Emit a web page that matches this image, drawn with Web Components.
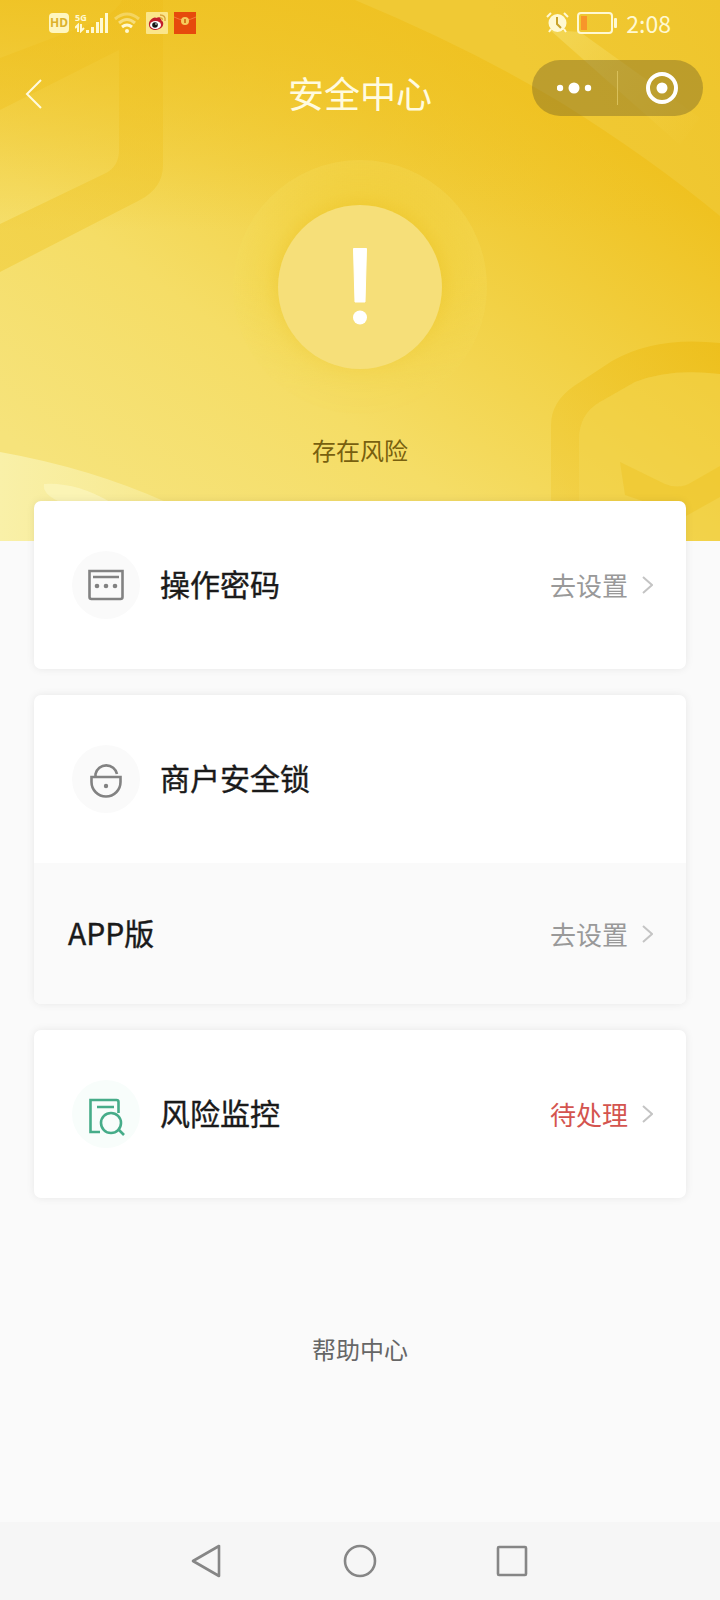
<!DOCTYPE html>
<html lang="zh-CN">
<head>
<meta charset="utf-8">
<meta name="viewport" content="width=device-width, initial-scale=1">
<title>安全中心</title>
<style>
  html, body { margin: 0; }
  body {
    background: #fafafa;
    color: #1a1a1a;
    font-family: "Noto Sans CJK SC", "Noto Sans", sans-serif;
    font-size: 24px;
  }
</style>
</head>
<body>
<security-page>
  <security-hero slot="hero" status="存在风险">
    <status-bar slot="top" time="2:08"></status-bar>
    <title-bar slot="top" heading="安全中心"></title-bar>
  </security-hero>

  <setting-card>
    <setting-row label="操作密码" action="去设置"><line-icon slot="icon" name="password"></line-icon></setting-row>
  </setting-card>
  <setting-card>
    <setting-row label="商户安全锁"><line-icon slot="icon" name="lock"></line-icon></setting-row>
    <setting-row sub label="APP版" action="去设置"></setting-row>
  </setting-card>
  <setting-card>
    <setting-row label="风险监控" action="待处理" urgent><line-icon slot="icon" name="monitor"></line-icon></setting-row>
  </setting-card>

  <a slot="help" href="#help">帮助中心</a>
  <system-nav slot="nav"></system-nav>
</security-page>

<script>
const define = (name, render) => customElements.define(name, class extends HTMLElement {
  constructor() {
    super();
    this.attachShadow({ mode: 'open' });
  }
  connectedCallback() {
    this.shadowRoot.innerHTML = render(this);
  }
});

define('security-page', () => `
  <style>
    :host { display: flex; flex-direction: column; min-height: 100vh; }
    main { display: flex; flex-direction: column; gap: 26px; margin: -40px 34px 0; position: relative; }
    footer { text-align: center; margin: 133px 0 100px; line-height: 36px; }
    ::slotted(a) { color: #666; text-decoration: none; }
    ::slotted(system-nav) { margin-top: auto; }
  </style>
  <slot name="hero"></slot>
  <main><slot></slot></main>
  <footer><slot name="help"></slot></footer>
  <slot name="nav"></slot>`);

define('security-hero', el => `
  <style>
    :host { display: block; position: relative; padding-bottom: 73px; overflow: hidden; }
    .scene { position: absolute; inset: 0; width: 100%; height: 100%; }
    header, section { position: relative; }
    section { display: flex; flex-direction: column; align-items: center; gap: 15px; margin-top: 41px; }
    p { margin: 0; line-height: 36px; color: #78600f; }
    .emblem { display: block; }
  </style>
  <svg class="scene" viewBox="0 0 720 541" preserveAspectRatio="none" aria-hidden="true">
    <defs>
      <linearGradient id="base" gradientUnits="userSpaceOnUse" x1="120" y1="520" x2="480" y2="30">
        <stop offset="0" stop-color="#f6e37b"/><stop offset=".35" stop-color="#f5dd66"/>
        <stop offset=".65" stop-color="#f2d145"/><stop offset="1" stop-color="#efc11f"/>
      </linearGradient>
      <linearGradient id="topFade" x1="0" y1="0" x2="0" y2="1">
        <stop offset="0" stop-color="#efc223" stop-opacity=".9"/><stop offset="1" stop-color="#efc223" stop-opacity="0"/>
      </linearGradient>
      <linearGradient id="corner" gradientUnits="userSpaceOnUse" x1="540" y1="100" x2="720" y2="0">
        <stop offset="0" stop-color="#f0c934"/><stop offset="1" stop-color="#efc52c"/>
      </linearGradient>
      <linearGradient id="beam" gradientUnits="userSpaceOnUse" x1="550" y1="30" x2="690" y2="150">
        <stop offset="0" stop-color="#f5dc62" stop-opacity=".7"/><stop offset="1" stop-color="#f3d34d" stop-opacity="0"/>
      </linearGradient>
      <linearGradient id="hex" x1="0" y1="0" x2="0" y2="1">
        <stop offset="0" stop-color="#eebd1b" stop-opacity=".4"/><stop offset="1" stop-color="#f0c92f" stop-opacity=".5"/>
      </linearGradient>
      <linearGradient id="hexR" x1="1" y1="0" x2="0" y2="1">
        <stop offset="0" stop-color="#edbd18" stop-opacity=".8"/><stop offset="1" stop-color="#efc62c" stop-opacity=".3"/>
      </linearGradient>
      <linearGradient id="pale" x1="0" y1="0" x2="1" y2="0">
        <stop offset="0" stop-color="#f9f0a8"/><stop offset="1" stop-color="#f8eb96" stop-opacity=".5"/>
      </linearGradient>
    </defs>
    <rect width="720" height="541" fill="url(#base)"/>
    <rect width="720" height="230" fill="url(#topFade)"/>
    <path d="M355 0H720V216Q650 158 560 102Q470 48 355 0Z" fill="url(#corner)"/>
    <path d="M550 30L580 32L700 118L680 145Z" fill="url(#beam)"/>
    <path d="M0 58L100 20Q118 10 122 0H163V165Q163 188 140 200L0 272V224L106 173Q119 166 119 150V50L0 110Z" fill="url(#hex)"/>
    <path d="M551 541V425Q551 402 574 386L612 361Q655 336 720 343V374Q670 368 635 382L600 402Q579 414 579 440V541Z" fill="url(#hexR)"/>
    <path d="M579 541V440Q579 414 600 402L635 382Q670 368 720 374V541Z" fill="#f1cf42" fill-opacity=".5"/>
    <path d="M620 462L665 484Q680 490 692 482L720 466V497L686 516L625 495Z" fill="#eec01f" fill-opacity=".4"/>
    <path d="M0 452Q90 468 166 502L260 541H0Z" fill="url(#pale)"/>
    <path d="M44 484Q76 482 110 502H60Q42 494 44 484Z" fill="#fbf5ba" fill-opacity=".8"/>
  </svg>
  <header><slot name="top"></slot></header>
  <section>
    <svg class="emblem" width="260" height="260" viewBox="0 0 260 260" role="img" aria-label="警告">
      <defs>
        <radialGradient id="halo">
          <stop offset=".62" stop-color="#edc524" stop-opacity=".45"/>
          <stop offset=".76" stop-color="#f3d544" stop-opacity=".35"/>
          <stop offset="1" stop-color="#f5de5e" stop-opacity=".3"/>
        </radialGradient>
        <linearGradient id="fade" x1="0" y1="0" x2="0" y2="1">
          <stop offset=".45" stop-color="#fff"/><stop offset=".9" stop-color="#555"/>
        </linearGradient>
        <mask id="soft"><rect width="260" height="260" fill="url(#fade)"/></mask>
      </defs>
      <circle cx="130" cy="130" r="127" fill="url(#halo)" mask="url(#soft)"/>
      <circle cx="130" cy="130" r="82" fill="#f6df79"/>
      <path d="M123.500 91.500H136.500L135 145H125Z" fill="#fff" stroke="#fff" stroke-linejoin="round"/>
      <circle cx="130" cy="160.500" r="7" fill="#fff"/>
    </svg>
    <p>${el.getAttribute('status')}</p>
  </section>`);

define('status-bar', el => `
  <style>
    :host { display: flex; align-items: center; justify-content: space-between; height: 46px; padding: 0 49px; color: #fff9d2; box-sizing: border-box; }
    div { display: flex; align-items: center; }
    svg { display: block; }
    .left { gap: 6px; }
    .right { gap: 8px; }
    .hd { width: 20px; height: 20px; border-radius: 4px; background: #fff6c0; color: #dcb22c; font: 700 12px/20px "Noto Sans", sans-serif; text-align: center; }
    .net { align-items: flex-end; }
    .gen { flex-direction: column; align-items: flex-start; width: 11px; font: 700 9px/10px "Open Sans", sans-serif; }
    time { font-size: 23px; line-height: 36px; }
  </style>
  <div class="left">
    <span class="hd">HD</span>
    <div class="net">
      <div class="gen"><span>5G</span>
        <svg width="10" height="10" viewBox="0 0 10 10" fill="none" stroke="currentColor" stroke-width="2"><path d="M3 9V2L0 5M6 1V8L9 5"/></svg>
      </div>
      <svg width="22" height="20" viewBox="0 0 22 20" fill="currentColor"><path d="M0 17h3v3H0zM5 14h3v6H5zM10 9h3v11h-3zM14 5h3v15h-3zM19 0h3v20h-3z"/></svg>
    </div>
    <svg width="26" height="22" viewBox="0 0 26 22" fill="none" stroke="currentColor" stroke-width="3">
      <path d="M1 7Q13 -3 25 7" opacity=".35"/><path d="M5 11Q13 4 21 11" opacity=".5"/><path d="M8 15Q13 11 18 15"/><circle cx="13" cy="19" r="2" fill="currentColor" stroke="none"/>
    </svg>
    <svg width="22" height="22" viewBox="0 0 22 22">
      <rect width="22" height="22" rx="1" fill="#fbe68a"/>
      <path d="M3 13C2 9 8 4 10 6C14 4 16 6 15 8C19 10 18 17 10 18C6 18 3 16 3 13Z" fill="#c2202c"/>
      <ellipse cx="9.500" cy="13" rx="5.500" ry="4" fill="#fff"/><circle cx="9" cy="13" r="2.800" fill="#151515"/><circle cx="10" cy="12" r=".8" fill="#fff"/>
      <path d="M14 3Q20 3 19 9M14 6Q17 6 16 8" fill="none" stroke="#dca43a" stroke-width="1.400"/>
    </svg>
    <svg width="22" height="22" viewBox="0 0 22 22">
      <rect width="22" height="22" fill="#e64a0c"/><path d="M0 5Q11 11 22 5" fill="none" stroke="#f27d3a"/><circle cx="11" cy="9" r="4" fill="#f6cb5c"/><path d="M11 7v4" stroke="#d97a1c" stroke-width="2"/>
    </svg>
  </div>
  <div class="right">
    <svg width="23" height="22" viewBox="0 0 23 22">
      <path d="M1 5L5 1M22 5L18 1M5 17L3 20M18 17L20 20" stroke="currentColor" stroke-width="2" fill="none"/>
      <circle cx="11.500" cy="11" r="9" fill="currentColor"/><path d="M11 5v7l4 4" fill="none" stroke="#c9a32c" stroke-width="2"/>
    </svg>
    <svg width="41" height="22" viewBox="0 0 41 22">
      <rect x="1" y="1" width="34" height="20" rx="3" fill="none" stroke="currentColor" stroke-width="2"/>
      <rect x="4" y="4" width="6" height="14" fill="#f8962a"/><rect x="37" y="6" width="3" height="10" rx="1" fill="currentColor"/>
    </svg>
    <time>${el.getAttribute('time')}</time>
  </div>`);

define('title-bar', el => `
  <style>
    :host { display: grid; grid-template-columns: 1fr auto 1fr; align-items: end; padding: 14px 17px 0; color: #fffbe0; }
    h1 { margin: 0; font-size: 36px; font-weight: 400; line-height: 48px; }
    button { border: 0; padding: 0; background: none; color: inherit; display: grid; place-items: center; cursor: pointer; }
    .back { width: 34px; height: 44px; }
    .capsule { justify-self: end; display: flex; align-items: center; width: 171px; height: 56px; border-radius: 28px; background: rgba(112, 96, 38, .4); }
    .capsule button { flex: 1; height: 56px; }
    .capsule i { width: 1px; height: 34px; background: #d9c05a; }
  </style>
  <button class="back" aria-label="返回"><svg width="18" height="30" viewBox="0 0 18 30" fill="none" stroke="currentColor" stroke-width="2"><path d="M16 1L2 15L16 29"/></svg></button>
  <h1>${el.getAttribute('heading')}</h1>
  <div class="capsule">
    <button aria-label="更多"><svg width="36" height="12" viewBox="0 0 36 12" fill="#fff"><circle cx="3" cy="6" r="3.200"/><circle cx="17" cy="6" r="5.500"/><circle cx="31" cy="6" r="3.200"/></svg></button>
    <i></i>
    <button aria-label="关闭"><svg width="34" height="34" viewBox="0 0 34 34"><circle cx="18" cy="17" r="14" fill="none" stroke="#fff" stroke-width="4"/><circle cx="18" cy="17" r="5.500" fill="#fff"/></svg></button>
  </div>`);

define('setting-card', () => `
  <style>
    :host { display: block; border-radius: 7px; background: #fff; box-shadow: 0 0 8px rgba(0, 0, 0, .08); overflow: hidden; }
  </style>
  <slot></slot>`);

define('setting-row', el => {
  const action = el.getAttribute('action');
  return `
  <style>
    :host { display: flex; align-items: center; height: 168px; padding: 0 33px 0 38px; color: #1a1a1a; }
    :host([sub]) { height: 141px; padding-left: 34px; background: #fafafa; }
    ::slotted(line-icon) { margin-right: 20px; }
    h2 { margin: 0; padding-bottom: 4px; flex: 1; font-size: 30px; font-weight: 400; line-height: 44px; -webkit-text-stroke: .4px; }
    a { display: flex; align-items: center; gap: 14px; font-size: 26px; line-height: 38px; color: #999; text-decoration: none; }
    :host([urgent]) a { color: #d4544f; }
    svg { display: block; }
  </style>
  <slot name="icon"></slot>
  <h2>${el.getAttribute('label')}</h2>
  ${action ? `<a href="#detail">${action}<svg width="11" height="18" viewBox="0 0 11 18" fill="none" stroke="#c4c4c4" stroke-width="2"><path d="M1 1L10 9L1 17"/></svg></a>` : ''}`;
});

const drawings = {
  password: '<path d="M17.500 20H50.500V46Q50.500 48 48.500 48H19.500Q17.500 48 17.500 46Z"/><path d="M21 26H47"/><g fill="currentColor" stroke="none"><circle cx="25" cy="35" r="2.300"/><circle cx="34" cy="35" r="2.300"/><circle cx="43" cy="35" r="2.300"/></g>',
  lock: '<path d="M19.500 32H48.500V37A14.500 14.500 0 0 1 19.500 37ZM23.500 32V29A11 11 0 0 1 45 29"/><circle cx="34" cy="41" r="2.200" fill="currentColor" stroke="none"/>',
  monitor: '<path d="M28 52H18.500V20H44.500Q46.500 20 46.500 22V33M25 27H42"/><circle cx="39" cy="43" r="10"/><path d="M46 49L52 55"/>'
};

define('line-icon', el => `
  <style>
    :host { display: block; width: 68px; height: 68px; border-radius: 50%; background: #fafafa; color: #828282; }
    :host([name=monitor]) { background: #f8fdfb; color: #46ac89; }
    svg { display: block; }
  </style>
  <svg width="68" height="68" viewBox="0 0 68 68" fill="none" stroke="currentColor" stroke-width="2.600" aria-hidden="true">${drawings[el.getAttribute('name')]}</svg>`);

define('system-nav', () => `
  <style>
    :host { display: flex; justify-content: center; align-items: center; gap: 104px; height: 78px; background: #f6f6f6; color: #868686; }
    button { width: 48px; height: 48px; padding: 0; border: 0; background: none; color: inherit; display: grid; place-items: center; }
  </style>
  <button aria-label="后退"><svg width="34" height="36" viewBox="0 0 34 36" fill="none" stroke="currentColor" stroke-width="2.600" stroke-linejoin="round"><path d="M28 3V33L2 18Z"/></svg></button>
  <button aria-label="主屏幕"><svg width="34" height="34" viewBox="0 0 34 34" fill="none" stroke="currentColor" stroke-width="2.600"><circle cx="17" cy="17" r="15"/></svg></button>
  <button aria-label="最近任务"><svg width="32" height="32" viewBox="0 0 32 32" fill="none" stroke="currentColor" stroke-width="2.600"><rect x="2" y="2" width="28" height="28" rx="1"/></svg></button>`);
</script>
</body>
</html>
